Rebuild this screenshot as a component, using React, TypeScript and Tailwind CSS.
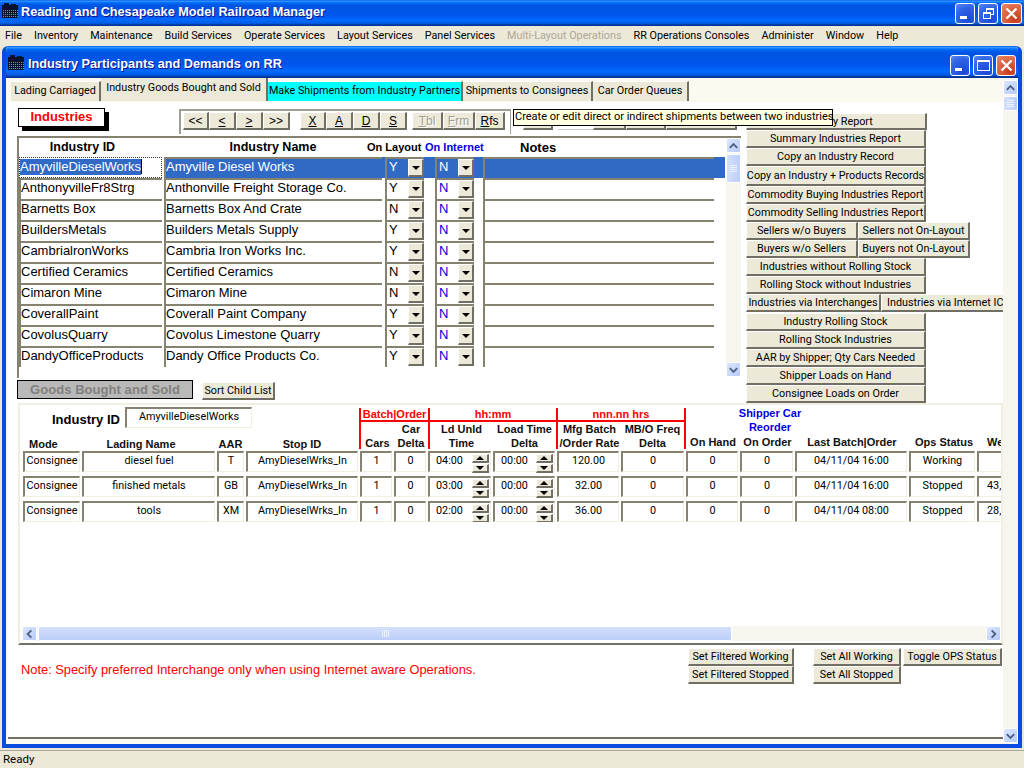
import type { ReactNode } from "react";

const RAISED = "border-t border-l border-r-2 border-b-2 border-t-white border-l-white border-r-[#716f64] border-b-[#716f64] bg-[#ece9d8]";
const SUNKEN = "border-t-2 border-l-2 border-r border-b border-t-[#85826f] border-l-[#85826f] border-r-[#f1efe2] border-b-[#f1efe2] bg-white";
const UI = "font-['Roboto',sans-serif] text-[10.8px]";

const MENUS = ["File", "Inventory", "Maintenance", "Build Services", "Operate Services", "Layout Services", "Panel Services", "Multi-Layout Operations", "RR Operations Consoles", "Administer", "Window", "Help"];

const INDUSTRIES = [
  ["AmyvilleDieselWorks", "Amyville Diesel Works", "Y"],
  ["AnthonyvilleFr8Strg", "Anthonville Freight Storage Co.", "Y"],
  ["Barnetts Box", "Barnetts Box And Crate", "N"],
  ["BuildersMetals", "Builders Metals Supply", "Y"],
  ["CambrialronWorks", "Cambria Iron Works Inc.", "Y"],
  ["Certified Ceramics", "Certified Ceramics", "N"],
  ["Cimaron Mine", "Cimaron Mine", "N"],
  ["CoverallPaint", "Coverall Paint Company", "Y"],
  ["CovolusQuarry", "Covolus Limestone Quarry", "Y"],
  ["DandyOfficeProducts", "Dandy Office Products Co.", "Y"],
];

const GOODS = [
  { lading: "diesel fuel", aar: "T", ld: "04:00", rate: "120.00", last: "04/11/04 16:00", ops: "Working", wt: "" },
  { lading: "finished metals", aar: "GB", ld: "03:00", rate: "32.00", last: "04/11/04 16:00", ops: "Stopped", wt: "43," },
  { lading: "tools", aar: "XM", ld: "02:00", rate: "36.00", last: "04/11/04 08:00", ops: "Stopped", wt: "28," },
];

function AppIcon() {
  const dots = [];
  for (let y = 0; y < 7; y++) {
    for (let x = 0; x < 8; x++) {
      dots.push(<rect key={`${x}-${y}`} x={1 + x * 2} y={7 + y * 2} width="1" height="1" fill={y < 4 ? "#25c08a" : "#1c6be0"} />);
    }
  }
  return (
    <svg width="17" height="21" viewBox="0 0 17 21" className="shrink-0">
      <rect x="0" y="2" width="16" height="13" fill="#06122e" />
      <rect x="2" y="0" width="5" height="3" fill="#06122e" />
      <rect x="9" y="1" width="5" height="2" fill="#06122e" />
      {dots}
    </svg>
  );
}

function CapButton({ kind, x = false }: { kind: "min" | "max" | "restore" | "close"; x?: boolean }) {
  const bg = kind === "close"
    ? "bg-[radial-gradient(circle_at_70%_80%,#c8381a,#e2704f_70%,#e88c6e)]"
    : "bg-[radial-gradient(circle_at_70%_80%,#1c48d8,#2f63e6_60%,#5b8af0)]";
  return (
    <div className={`flex h-[21px] shrink-0 items-center justify-center rounded-[3px] border border-white ${x ? "w-[21px]" : "w-[20px]"} ${bg}`}>
      <svg width="15" height="15" viewBox="0 0 15 15" fill="none" stroke="white">
        {kind === "min" && <rect x="2" y="10" width="7" height="3" fill="white" stroke="none" />}
        {kind === "max" && <><rect x="1.5" y="2.5" width="12" height="10" strokeWidth="1" /><rect x="1.5" y="2" width="12" height="2" fill="white" stroke="none" /></>}
        {kind === "restore" && <><rect x="5.5" y="2.5" width="7" height="6" /><rect x="5.5" y="2" width="7" height="2" fill="white" stroke="none" /><rect x="2.5" y="6.5" width="7" height="6" fill="#2f63e6" /><rect x="2.5" y="6" width="7" height="2" fill="white" stroke="none" /></>}
        {kind === "close" && <path d="M2.5 2.5 L12.5 12.5 M12.5 2.5 L2.5 12.5" strokeWidth="2.4" />}
      </svg>
    </div>
  );
}

function ScrollBtn({ dir }: { dir: "up" | "down" | "left" | "right" }) {
  const d = {
    up: "M3 9 L7 5 L11 9",
    down: "M3 5 L7 9 L11 5",
    left: "M9 3 L5 7 L9 11",
    right: "M5 3 L9 7 L5 11",
  }[dir];
  return (
    <div className="flex h-[15px] w-[15px] shrink-0 items-center justify-center rounded-[2px] border border-white bg-[linear-gradient(135deg,#dbe6fd,#b7cbf8)]">
      <svg width="14" height="14" viewBox="0 0 14 14" fill="none" stroke="#4d6185" strokeWidth="2">
        <path d={d} />
      </svg>
    </div>
  );
}

function VThumb({ h }: { h: string }) {
  return (
    <div className={`mt-px flex w-[15px] shrink-0 flex-col items-center justify-center gap-px rounded-[2px] border border-white bg-[linear-gradient(90deg,#d3dffc,#bccff9)] ${h}`}>
      <div className="h-px w-[7px] bg-[#eef3ff]" />
      <div className="h-px w-[7px] bg-[#eef3ff]" />
      <div className="h-px w-[7px] bg-[#eef3ff]" />
      <div className="h-px w-[7px] bg-[#eef3ff]" />
    </div>
  );
}

function Tab({ label, w, active, cyan }: { label: string; w: string; active?: boolean; cyan?: boolean }) {
  return (
    <div className={`flex shrink-0 items-center justify-center whitespace-nowrap border-r-2 border-r-[#716f64] text-black ${UI} ${w} ${active ? "h-[23px] bg-[#ece9d8] pb-[3px]" : "mt-[3px] h-[20px] border-t border-t-white"} ${cyan ? "bg-[#00ffff]" : active ? "" : "bg-[#ece9d8]"}`}>
      {label}
    </div>
  );
}

function ToolBtn({ w, children, ghost }: { w: string; children?: ReactNode; ghost?: boolean }) {
  return (
    <div className={`flex h-[18px] shrink-0 items-center justify-center text-[12px] ${RAISED} ${w} ${ghost ? "text-[#a19e8e] [text-shadow:1px_1px_white]" : "text-black"}`}>
      {children}
    </div>
  );
}

function SideBtn({ children, w = "w-[180px]", h = "h-[18px]" }: { children: ReactNode; w?: string; h?: string }) {
  return (
    <div className={`flex shrink-0 items-center justify-center whitespace-nowrap pt-[2px] text-black ${UI} ${RAISED} ${w} ${h}`}>
      {children}
    </div>
  );
}

function Combo({ value, selected, blue }: { value: string; selected: boolean; blue?: boolean }) {
  return (
    <div className={`flex h-[21px] w-[39px] shrink-0 border-t-2 border-l-2 border-[#85826f] text-[13px] ${selected ? "bg-[#316ac5] text-white" : blue ? "bg-white text-[#0000e0]" : "bg-white text-black"}`}>
      <div className="flex-1 pl-[2px] leading-[15px]">{value}</div>
      <div className={`flex h-[18px] w-[16px] items-center justify-center ${RAISED}`}>
        <div className="h-0 w-0 border-x-[4px] border-t-[4px] border-x-transparent border-t-black" />
      </div>
    </div>
  );
}

function GridCell({ w, value, selected, focus }: { w: string; value?: string; selected?: boolean; focus?: boolean }) {
  if (focus) {
    return (
      <div className={`flex h-[21px] shrink-0 items-start border border-dotted border-[#333] bg-white pt-px text-[13px] ${w}`}>
        <span className="bg-[#316ac5] leading-[16px] text-white">{value}</span>
        <span className="h-[15px] w-px bg-black" />
      </div>
    );
  }
  return (
    <div className={`h-[21px] shrink-0 overflow-hidden whitespace-nowrap border-t-2 border-l-2 border-[#85826f] text-[13px] leading-[15px] ${w} ${selected ? "bg-[#316ac5] text-white" : "bg-white text-black"}`}>
      {value}
    </div>
  );
}

function GoodCell({ children, className = "" }: { children?: ReactNode; className?: string }) {
  return (
    <div className={`mr-[2px] flex h-[21px] items-start justify-center whitespace-nowrap text-black ${UI} leading-[15px] ${SUNKEN} ${className}`}>
      {children}
    </div>
  );
}

function Spinner() {
  return (
    <div className="mr-px flex flex-col gap-px pt-px">
      <div className={`flex h-[9px] w-[17px] items-center justify-center ${RAISED}`}>
        <div className="h-0 w-0 border-x-[4px] border-b-[4px] border-x-transparent border-b-black" />
      </div>
      <div className={`flex h-[9px] w-[17px] items-center justify-center ${RAISED}`}>
        <div className="h-0 w-0 border-x-[4px] border-t-[4px] border-x-transparent border-t-black" />
      </div>
    </div>
  );
}

function HeadSub({ w, lines }: { w: string; lines: string[] }) {
  return (
    <div className={`flex shrink-0 flex-col items-center justify-end whitespace-nowrap text-[11px] font-bold leading-[14px] text-[#111] ${w}`}>
      {lines.map((l) => <div key={l}>{l}</div>)}
    </div>
  );
}

function RedGroup({ w, label, last, children }: { w: string; label: string; last?: boolean; children: ReactNode }) {
  return (
    <div className={`flex h-[41px] shrink-0 flex-col border-l-2 border-l-[#ff0000] ${last ? "border-r-2 border-r-[#ff0000]" : ""} ${w}`}>
      <div className="h-[14px] whitespace-nowrap border-b-2 border-b-[#ff0000] text-center text-[11px] font-bold leading-[12px] text-[#ff0000]">{label}</div>
      <div className="flex flex-1 items-end">{children}</div>
    </div>
  );
}

export default function App() {
  return (
    <div className="relative flex h-[768px] w-[1024px] flex-col overflow-hidden bg-[#ece9d8] font-['Liberation_Sans',Arial,sans-serif]">
      {/* main frame title */}
      <div className="flex h-[26px] shrink-0 items-center bg-[linear-gradient(180deg,#0058ee_0%,#3593ff_4%,#288eff_6%,#127dff_8%,#036ffc_10%,#0262ee_14%,#0057e5_20%,#0054e3_24%,#0055eb_56%,#005bf5_66%,#026afe_76%,#0062ef_86%,#0052d6_92%,#0040ab_94%,#003092_100%)] pl-[2px] pr-[2px]">
        <AppIcon />
        <div className="ml-[2px] whitespace-nowrap text-[12.7px] font-bold text-white [text-shadow:1px_1px_#0f1089]">Reading and Chesapeake Model Railroad Manager</div>
        <div className="ml-auto flex gap-[3px]">
          <CapButton kind="min" />
          <CapButton kind="restore" />
          <CapButton kind="close" x />
        </div>
      </div>

      {/* menu */}
      <div className={`flex h-[20px] shrink-0 items-center gap-3 pl-[5px] text-black ${UI}`}>
        {MENUS.map((m) => (
          <span key={m} className={`whitespace-nowrap ${m.startsWith("Multi") ? "text-[#aca899]" : ""}`}>{m}</span>
        ))}
      </div>

      {/* child window */}
      <div className="ml-[2px] flex h-[702px] w-[1020px] shrink-0 flex-col overflow-hidden rounded-t-[6px] border-x-4 border-b-4 border-x-[#0a4be0] border-b-[#0a4be0] bg-[#fbf9f0]">
        <div className="-mx-[4px] flex h-[32px] shrink-0 items-center bg-[linear-gradient(180deg,#0058ee_0%,#3593ff_4%,#288eff_6%,#127dff_8%,#036ffc_10%,#0262ee_14%,#0057e5_20%,#0054e3_24%,#0055eb_56%,#005bf5_66%,#026afe_76%,#0062ef_86%,#0052d6_92%,#0040ab_94%,#003092_100%)] pl-[6px] pr-[6px] pt-[6px]">
          <AppIcon />
          <div className="ml-[3px] whitespace-nowrap text-[12.7px] font-bold text-white [text-shadow:1px_1px_#0f1089]">Industry Participants and Demands on RR</div>
          <div className="ml-auto flex gap-[3px]">
            <CapButton kind="min" />
            <CapButton kind="max" />
            <CapButton kind="close" />
          </div>
        </div>

        <div className="flex min-h-0 flex-1">
          {/* scrolled view */}
          <div className="flex w-[997px] shrink-0 flex-col pl-[2px]">
            {/* tabs */}
            <div className="flex h-[24px] shrink-0 pl-[3px]">
              <Tab label="Lading Carriaged" w="w-[90px]" />
              <Tab label="Industry Goods Bought and Sold" w="w-[167px]" active />
              <Tab label="Make Shipments from Industry Partners" w="w-[195px]" cyan />
              <Tab label="Shipments to Consignees" w="w-[130px]" />
              <Tab label="Car Order Queues" w="w-[96px]" />
            </div>

            <div className="flex h-[637px] shrink-0 flex-col border-b-2 border-b-[#716f64] bg-white">
              {/* upper part */}
              <div className="flex h-[301px] w-[995px] shrink-0 overflow-hidden">
                <div className="w-[733px] shrink-0 pl-[9px]">
                  <div className="flex h-[34px]">
                    <div className="ml-px mt-[6px] h-[19px] w-[87px] shrink-0 border border-black bg-white text-center text-[13px] font-bold leading-[16px] text-[#ff0000] shadow-[4px_4px_0_#000]">Industries</div>
                    <div className="ml-[74px] mt-[7px] flex h-[25px] w-[332px] shrink-0 border-t-2 border-l-2 border-r border-[#a19f93] pl-[2px] pt-px">
                      <div className="flex"><ToolBtn w="w-[26px]">&lt;&lt;</ToolBtn><ToolBtn w="w-[27px]"><u>&lt;</u></ToolBtn><ToolBtn w="w-[27px]"><u>&gt;</u></ToolBtn><ToolBtn w="w-[27px]">&gt;&gt;</ToolBtn></div>
                      <div className="ml-[10px] flex"><ToolBtn w="w-[26px]"><u>X</u></ToolBtn><ToolBtn w="w-[27px]"><u>A</u></ToolBtn><ToolBtn w="w-[27px]"><u>D</u></ToolBtn><ToolBtn w="w-[27px]"><u>S</u></ToolBtn></div>
                      <div className="ml-[5px] flex"><ToolBtn w="w-[31px]" ghost><u>T</u>bl</ToolBtn><ToolBtn w="w-[32px]" ghost><u>F</u>rm</ToolBtn><ToolBtn w="w-[30px]"><u>R</u>fs</ToolBtn></div>
                    </div>
                    {/* these sit behind the tooltip */}
                    <div className="ml-[12px] mt-[10px] flex">
                      <ToolBtn w="w-[30px]" /><div className="ml-[5px] h-[18px] w-[35px] border-b border-[#ccc]" /><ToolBtn w="w-[33px]" /><ToolBtn w="w-[40px]" /><ToolBtn w="w-[71px]" />
                    </div>
                  </div>

                  {/* industries grid */}
                  <div className="flex h-[242px] w-[724px] border-t-2 border-l-2 border-[#85826f] bg-white">
                    <div className="w-[707px] shrink-0">
                      <div className="flex h-[19px] items-center whitespace-nowrap font-bold">
                        <div className="w-[143px] pr-[16px] text-center text-[12.5px]">Industry ID</div>
                        <div className="ml-[2px] w-[203px] pl-[15px] text-center text-[12.5px]">Industry Name</div>
                        <div className="w-[58px] text-[11px]">On Layout</div>
                        <div className="w-[95px] text-[11px] text-[#0000e0]">On Internet</div>
                        <div className="text-[13px]">Notes</div>
                      </div>
                      {INDUSTRIES.map(([id, name, yn], i) => {
                        const sel = i === 0;
                        return (
                          <div key={id} className="flex h-[21px]">
                            <GridCell w="w-[143px]" value={id} focus={sel} />
                            <div className={`ml-[2px] flex w-[561px] shrink-0 ${sel ? "bg-[#316ac5]" : ""}`}>
                              <GridCell w="w-[218px]" value={name} selected={sel} />
                              <div className="ml-[3px]"><Combo value={yn} selected={sel} /></div>
                              <div className="ml-[11px]"><Combo value="N" selected={sel} blue /></div>
                              <div className="ml-[9px] flex">
                                <GridCell w="w-[231px]" selected={sel} />
                              </div>
                            </div>
                          </div>
                        );
                      })}
                    </div>
                    <div className="flex h-[239px] w-[15px] shrink-0 flex-col bg-[#f6f5ee]">
                      <ScrollBtn dir="up" />
                      <VThumb h="h-[29px]" />
                      <div className="mt-auto"><ScrollBtn dir="down" /></div>
                    </div>
                  </div>

                  <div className="mt-[2px] flex">
                    <div className="flex h-[19px] w-[176px] items-center justify-center border border-black bg-[#b9b9b9] text-[13px] font-bold tracking-[0.05px] text-[#808080]">Goods Bought and Sold</div>
                    <div className={`ml-[9px] mt-[2px] flex h-[18px] w-[73px] items-center justify-center whitespace-nowrap pt-px ${UI} ${RAISED}`}>Sort Child List</div>
                  </div>
                </div>

                {/* report buttons */}
                <div className="ml-[5px] flex flex-col pt-[11px]">
                  <SideBtn w="w-[181px]" h="h-[17px]">Industry Report</SideBtn>
                  <SideBtn>Summary Industries Report</SideBtn>
                  <SideBtn>Copy an Industry Record</SideBtn>
                  <SideBtn h="h-[20px]">Copy an Industry + Products Records</SideBtn>
                  <SideBtn>Commodity Buying Industries Report</SideBtn>
                  <SideBtn>Commodity Selling Industries Report</SideBtn>
                  <div className="flex"><SideBtn w="w-[112px]">Sellers w/o Buyers</SideBtn><SideBtn w="w-[112px]">Sellers not On-Layout</SideBtn></div>
                  <div className="flex"><SideBtn w="w-[112px]">Buyers w/o Sellers</SideBtn><SideBtn w="w-[112px]">Buyers not On-Layout</SideBtn></div>
                  <SideBtn>Industries without Rolling Stock</SideBtn>
                  <SideBtn>Rolling Stock without Industries</SideBtn>
                  <div className="flex"><SideBtn w="w-[135px]">Industries via Interchanges</SideBtn><SideBtn w="w-[135px]">Industries via Internet ICs</SideBtn></div>
                  <div className="mt-px" />
                  <SideBtn>Industry Rolling Stock</SideBtn>
                  <SideBtn>Rolling Stock Industries</SideBtn>
                  <SideBtn>AAR by Shipper; Qty Cars Needed</SideBtn>
                  <SideBtn>Shipper Loads on Hand</SideBtn>
                  <SideBtn>Consignee Loads on Order</SideBtn>
                </div>
              </div>

              {/* goods panel */}
              <div className="ml-[10px] flex h-[242px] w-[985px] shrink-0 flex-col border-y-2 border-l-2 border-r-2 border-t-[#f1efe2] border-l-[#f1efe2] border-r-[#f1efe2] border-b-[#716f64]">
                <div className="w-[981px] overflow-hidden">
                  <div className="flex h-[44px] w-[1020px] pt-[3px]">
                    <div className="flex h-[41px] w-[339px] shrink-0 flex-col pl-[3px]">
                      <div className="-mt-px flex">
                        <div className="ml-[29px] mt-[3px] w-[70px] whitespace-nowrap text-[13px] font-bold">Industry ID</div>
                        <div className={`ml-[3px] h-[21px] w-[127px] border-t-2 border-l-2 border-[#85826f] border-r border-b border-r-[#f1efe2] border-b-[#f1efe2] text-center leading-[15px] ${UI}`}>AmyvilleDieselWorks</div>
                      </div>
                      <div className="mt-auto flex translate-y-[2px] text-[11px] font-bold leading-[14px] text-[#111]">
                        <div className="w-[43px] pl-[6px]">Mode</div>
                        <div className="w-[150px] text-center">Lading Name</div>
                        <div className="w-[29px] text-center">AAR</div>
                        <div className="w-[114px] text-center">Stop ID</div>
                      </div>
                    </div>

                    <RedGroup w="w-[69px]" label="Batch|Order">
                      <HeadSub w="w-[33px]" lines={["Cars"]} />
                      <HeadSub w="w-[34px]" lines={["Car", "Delta"]} />
                    </RedGroup>
                    <RedGroup w="w-[128px]" label="hh:mm">
                      <HeadSub w="w-[63px]" lines={["Ld Unld", "Time"]} />
                      <HeadSub w="w-[63px]" lines={["Load Time", "Delta"]} />
                    </RedGroup>
                    <RedGroup w="w-[130px]" label="nnn.nn hrs" last>
                      <HeadSub w="w-[63px]" lines={["Mfg Batch", "/Order Rate"]} />
                      <HeadSub w="w-[63px]" lines={["MB/O Freq", "Delta"]} />
                    </RedGroup>

                    <div className="flex h-[41px] shrink-0 flex-col">
                      <div className="-mt-[2px] ml-[20px] w-[128px] text-center text-[11px] font-bold leading-[14px] text-[#0000e0]">
                        <div>Shipper Car</div>
                        <div>Reorder</div>
                      </div>
                      <div className="mt-auto flex">
                        <HeadSub w="w-[54px]" lines={["On Hand"]} />
                        <HeadSub w="w-[55px]" lines={["On Order"]} />
                        <HeadSub w="w-[114px]" lines={["Last Batch|Order"]} />
                        <HeadSub w="w-[70px]" lines={["Ops Status"]} />
                        <div className="pl-[8px] text-[11px] font-bold leading-[14px] text-[#111]">Weight</div>
                      </div>
                    </div>
                  </div>

                  <div className="ml-[3px] mt-[2px] grid w-[1000px] grid-cols-[59px_135px_29px_114px_34px_34px_65px_64px_64px_65px_54px_55px_114px_68px_60px] gap-y-1">
                    {GOODS.map((g) => (
                      <div key={g.lading} className="contents">
                        <GoodCell>Consignee</GoodCell>
                        <GoodCell>{g.lading}</GoodCell>
                        <GoodCell>{g.aar}</GoodCell>
                        <GoodCell>AmyDieselWrks_In</GoodCell>
                        <GoodCell>1</GoodCell>
                        <GoodCell>0</GoodCell>
                        <GoodCell className="!justify-between"><span className="pl-[6px]">{g.ld}</span><Spinner /></GoodCell>
                        <GoodCell className="!justify-between"><span className="pl-[6px]">00:00</span><Spinner /></GoodCell>
                        <GoodCell>{g.rate}</GoodCell>
                        <GoodCell>0</GoodCell>
                        <GoodCell>0</GoodCell>
                        <GoodCell>0</GoodCell>
                        <GoodCell>{g.last}</GoodCell>
                        <GoodCell>{g.ops}</GoodCell>
                        <GoodCell className="!justify-start pl-[8px]">{g.wt}</GoodCell>
                      </div>
                    ))}
                  </div>
                </div>

                {/* horizontal scrollbar */}
                <div className="mb-[2px] ml-[2px] mt-auto flex h-[15px] w-[979px] shrink-0 bg-[#f6f5ee]">
                  <ScrollBtn dir="left" />
                  <div className="ml-[1px] flex h-[15px] w-[694px] items-center justify-center gap-px rounded-[2px] border border-white bg-[linear-gradient(180deg,#d3dffc,#bccff9)]">
                    <div className="h-[7px] w-px bg-[#eef3ff]" /><div className="h-[7px] w-px bg-[#eef3ff]" /><div className="h-[7px] w-px bg-[#eef3ff]" /><div className="h-[7px] w-px bg-[#eef3ff]" />
                  </div>
                  <div className="ml-auto"><ScrollBtn dir="right" /></div>
                </div>
              </div>

              {/* note and status buttons */}
              <div className="flex w-[995px] flex-1 overflow-hidden">
                <div className="ml-[13px] mt-[15px] w-[667px] shrink-0 whitespace-nowrap text-[12.85px] text-[#ff0000]">Note: Specify preferred Interchange only when using Internet aware Operations.</div>
                <div className="mt-[3px] flex flex-col">
                  <SideBtn w="w-[106px]">Set Filtered Working</SideBtn>
                  <SideBtn w="w-[106px]">Set Filtered Stopped</SideBtn>
                </div>
                <div className="ml-[19px] mt-[3px] flex flex-col">
                  <SideBtn w="w-[88px]">Set All Working</SideBtn>
                  <SideBtn w="w-[88px]">Set All Stopped</SideBtn>
                </div>
                <div className="ml-[2px] mt-[3px]">
                  <SideBtn w="w-[99px]">Toggle OPS Status</SideBtn>
                </div>
              </div>
            </div>
          </div>

          {/* outer vertical scrollbar */}
          <div className="flex w-[15px] shrink-0 flex-col bg-[#f6f5ee] pt-[2px]">
            <ScrollBtn dir="up" />
            <VThumb h="h-[15px]" />
            <div className="mb-px mt-auto"><ScrollBtn dir="down" /></div>
          </div>
        </div>
      </div>

      {/* status bar */}
      <div className="mt-[2px] flex h-[18px] shrink-0 items-center border-t border-t-[#aca899] pl-[3px] font-['Roboto',sans-serif] text-[11.5px] text-black">Ready</div>

      {/* tooltip */}
      <div className={`absolute left-[513px] top-[109px] z-10 flex h-[17px] w-[320px] items-center whitespace-nowrap border border-black bg-[#ffffe1] pl-[1px] text-[11px] text-black font-['Roboto',sans-serif]`}>
        Create or edit direct or indirect shipments between two industries
      </div>
    </div>
  );
}
